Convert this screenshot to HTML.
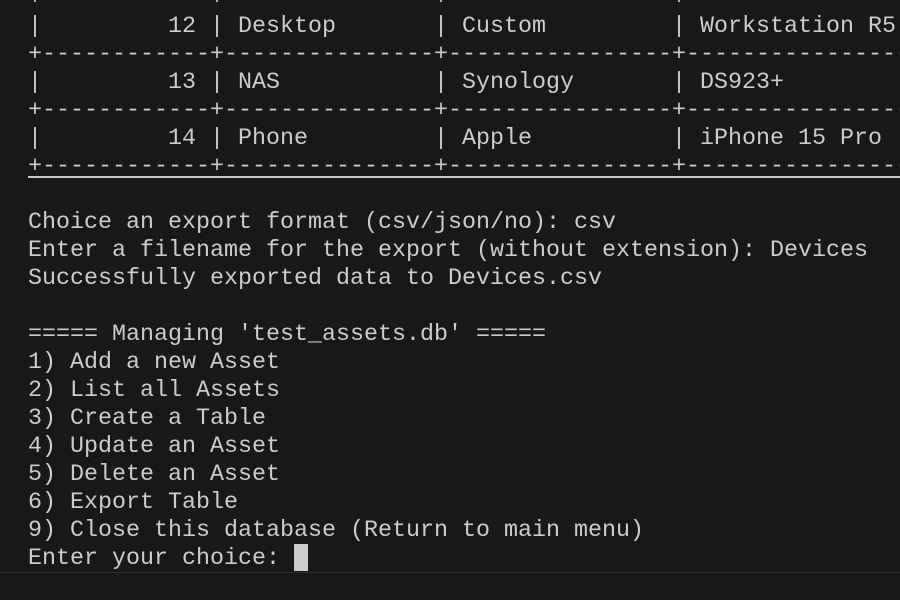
<!DOCTYPE html>
<html><head><style>
html,body{margin:0;padding:0;background:#181818;width:900px;height:600px;overflow:hidden}
pre{position:absolute;left:28px;top:-15px;width:872px;overflow:hidden;margin:0;font-family:"Liberation Mono",monospace;font-size:23.33px;line-height:28px;color:#cccccc;white-space:pre}
.cur{background:#cccccc;display:inline-block;width:14px;height:27px;vertical-align:top;margin-top:-1px}
.hl{position:absolute;left:28px;top:176px;width:872px;height:2px;background:#c8c8c8}
.bl{position:absolute;left:0;top:572px;width:900px;height:1px;background:#2e2e2e}
</style></head><body>
<pre>+------------+---------------+----------------+----------------------
|         12 | Desktop       | Custom         | Workstation R5 Pro
+------------+---------------+----------------+----------------------
|         13 | NAS           | Synology       | DS923+
+------------+---------------+----------------+----------------------
|         14 | Phone         | Apple          | iPhone 15 Pro
+------------+---------------+----------------+----------------------

Choice an export format (csv/json/no): csv
Enter a filename for the export (without extension): Devices
Successfully exported data to Devices.csv

===== Managing 'test_assets.db' =====
1) Add a new Asset
2) List all Assets
3) Create a Table
4) Update an Asset
5) Delete an Asset
6) Export Table
9) Close this database (Return to main menu)
Enter your choice: <span class="cur"></span></pre>
<div class="hl"></div>
<div class="bl"></div>
</body></html>
